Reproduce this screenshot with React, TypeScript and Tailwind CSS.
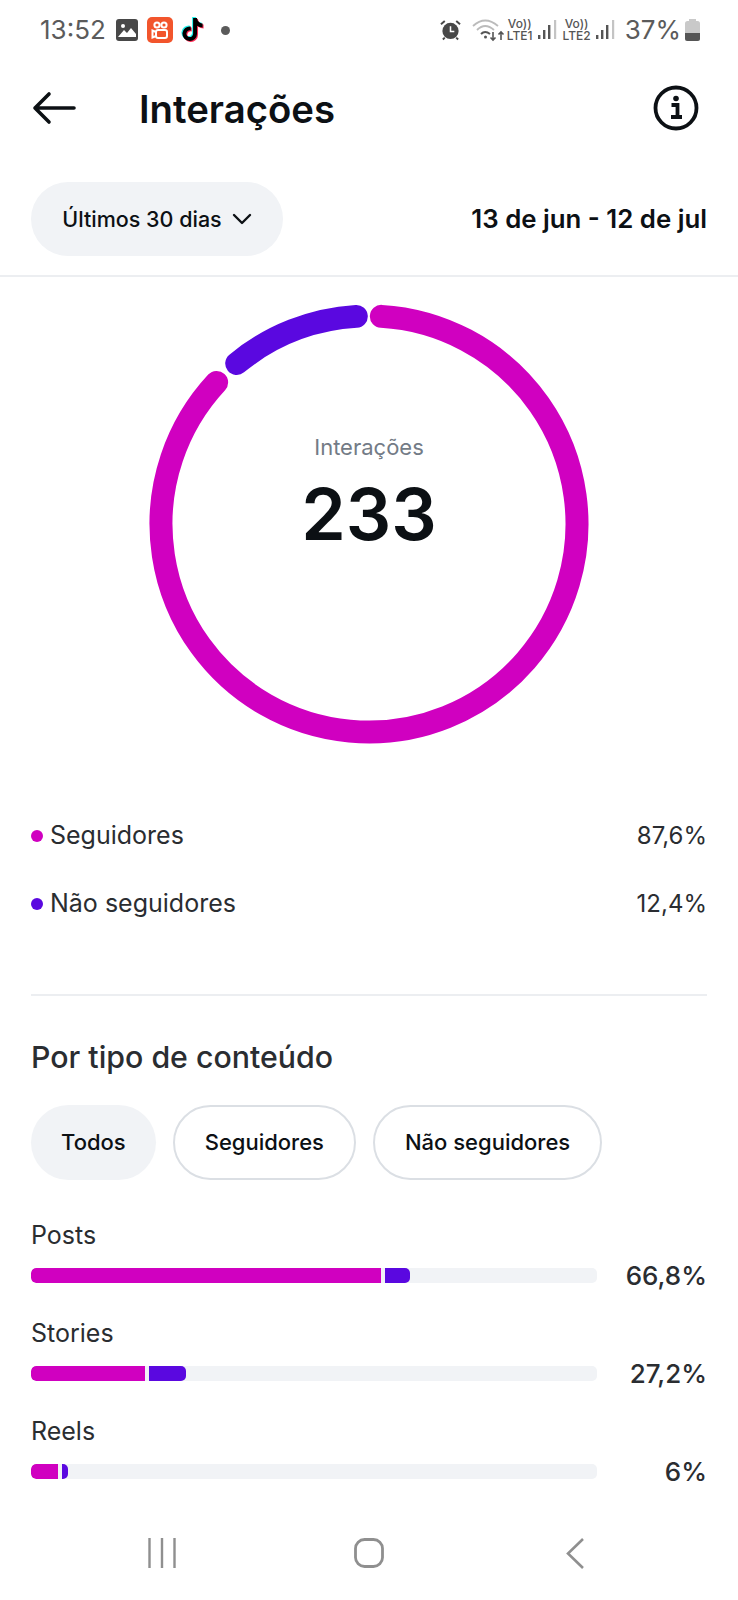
import { FaTiktok } from 'react-icons/fa';

const MAGENTA = '#d000c0';
const PURPLE = '#5a08e0';

function arc(from: number, to: number) {
  const r = 208;
  const pt = (deg: number) => {
    const a = (deg * Math.PI) / 180;
    return `${(220 + r * Math.sin(a)).toFixed(2)} ${(220 - r * Math.cos(a)).toFixed(2)}`;
  };
  const large = to - from > 180 ? 1 : 0;
  return `M ${pt(from)} A ${r} ${r} 0 ${large} 1 ${pt(to)}`;
}

function Signal() {
  return (
    <svg width="20" height="22" viewBox="0 0 20 22">
      <rect x="0" y="16" width="2.4" height="4" fill="#555" />
      <rect x="5" y="11" width="2.4" height="9" fill="#555" />
      <rect x="10" y="6" width="2.4" height="14" fill="#555" />
      <rect x="16" y="1" width="2.2" height="19" fill="#c4c4c4" />
    </svg>
  );
}

function Volte({ n }: { n: string }) {
  return (
    <div className="flex flex-col items-center text-[12px] leading-[12px] font-medium text-[#555]">
      <span>Vo))</span>
      <span>LTE{n}</span>
    </div>
  );
}

function StatusBar() {
  return (
    <div className="flex h-[60px] items-center justify-between pl-[40px] pr-[38px] text-[#5b5b5b]">
      <div className="flex items-center">
        <span className="text-[26px] leading-none">13:52</span>
        <svg className="ml-[10px]" width="22" height="22" viewBox="0 0 22 22">
          <rect width="22" height="22" rx="3" fill="#484848" />
          <circle cx="7" cy="7" r="2" fill="#fff" />
          <path d="M2 18 L8 11 L11 14 L15 9 L20 15 V18 Z" fill="#fff" />
        </svg>
        <div className="ml-[9px] flex h-[26px] w-[26px] flex-col items-center justify-center rounded-[5px] bg-[#f2552c]">
          <svg width="18" height="20" viewBox="0 0 18 20" fill="none" stroke="#fff" strokeWidth="2">
            <circle cx="6" cy="5" r="2.6" />
            <circle cx="13" cy="5" r="2.6" />
            <rect x="5" y="10" width="11" height="8" rx="2" />
            <path d="M5 12 L1.5 10.5 V17.5 L5 16" />
          </svg>
        </div>
        <div className="relative ml-[8px] h-[24px] w-[24px]">
          <FaTiktok className="absolute left-[-1px] top-[-1px] text-[#25f4ee]" size={23} />
          <FaTiktok className="absolute left-[1px] top-[1px] text-[#fe2c55]" size={23} />
          <FaTiktok className="absolute left-0 top-0 text-black" size={23} />
        </div>
        <span className="ml-[16px] h-[9px] w-[9px] rounded-full bg-[#5b5b5b]" />
      </div>
      <div className="flex items-center">
        <svg width="21" height="22" viewBox="0 0 22 22">
          <circle cx="11" cy="12" r="8.5" fill="#484848" />
          <path d="M11 7 V12.5 H15" stroke="#fff" strokeWidth="1.6" fill="none" />
          <path d="M1 5 L5 1.5 M21 5 L17 1.5 M5 19 L3 21 M17 19 L19 21" stroke="#484848" strokeWidth="2" />
        </svg>
        <svg className="ml-[11px]" width="34" height="24" viewBox="0 0 34 24" fill="none">
          <path d="M1 8 Q13 -3 26 8" stroke="#bbb" strokeWidth="1.8" />
          <path d="M5 12 Q13 4 22 12" stroke="#bbb" strokeWidth="1.8" />
          <path d="M9 16 Q13 12 18 16" stroke="#555" strokeWidth="2" />
          <circle cx="13.500" cy="19" r="1.500" fill="#555" />
          <path d="M21 14 V22 M18.500 19.500 L21 22 L23.500 19.500 M29 22 V14 M26.500 16.500 L29 14 L31.500 16.500" stroke="#555" strokeWidth="1.600" />
        </svg>
        <div className="ml-[1px]"><Volte n="1" /></div>
        <div className="ml-[5px]"><Signal /></div>
        <div className="ml-[5px]"><Volte n="2" /></div>
        <div className="ml-[5px]"><Signal /></div>
        <span className="ml-[9px] text-[26px] leading-none">37%</span>
        <svg className="ml-[4px]" width="15" height="22" viewBox="0 0 15 22">
          <rect x="4" y="0" width="7" height="3" fill="#c9c9c9" />
          <rect x="0" y="2" width="15" height="20" rx="2.500" fill="#c9c9c9" />
          <path d="M0 14 H15 V19.500 A2.500 2.500 0 0 1 12.500 22 H2.500 A2.500 2.500 0 0 1 0 19.500 Z" fill="#555" />
        </svg>
      </div>
    </div>
  );
}

function Pill({ label, active }: { label: string; active?: boolean }) {
  return (
    <div
      className={
        active
          ? 'flex h-[75px] items-center rounded-full bg-[#f1f3f6] px-[30px] text-[22px] font-medium text-[#0c1014]'
          : 'flex h-[75px] items-center rounded-full border-2 border-[#dbdfe4] px-[30px] text-[22px] font-medium text-[#0c1014]'
      }
    >
      {label}
    </div>
  );
}

function LegendRow({ color, label, value }: { color: string; label: string; value: string }) {
  return (
    <div className="flex h-[68px] items-center justify-between text-[25px] text-[#2a2d31]">
      <div className="flex items-center gap-[7px]">
        <span className="h-[12px] w-[12px] rounded-full" style={{ background: color }} />
        <span>{label}</span>
      </div>
      <span className="text-[24px]">{value}</span>
    </div>
  );
}

function BarRow({ label, a, b, value }: { label: string; a: number; b: number; value: string }) {
  return (
    <div className="flex h-[98px] flex-col">
      <div className="flex h-[49px] items-center text-[25px] text-[#2a2d31]">{label}</div>
      <div className="flex items-center justify-between">
        <div className="flex h-[15px] w-[566px] gap-[4px] overflow-hidden rounded-[5px] bg-[#f1f3f6]">
          <div className="h-full rounded-l-[5px]" style={{ width: a, background: MAGENTA }} />
          <div className="h-full rounded-r-[5px]" style={{ width: b, background: PURPLE }} />
        </div>
        <span className="mt-[1px] text-[26px] font-medium leading-[30px] text-[#2a2d31]">{value}</span>
      </div>
    </div>
  );
}

export default function App() {
  return (
    <div className="flex h-[1600px] w-[738px] flex-col overflow-hidden bg-white font-['Inter',sans-serif]">
      <StatusBar />

      <div className="flex h-[96px] items-center justify-between pl-[32px] pr-[39px]">
        <div className="flex items-center">
          <svg width="44" height="34" viewBox="0 0 44 34" fill="none" stroke="#0c1014" strokeWidth="3.600" strokeLinecap="round" strokeLinejoin="round">
            <path d="M42 17 H3 M17 3 L3 17 L17 31" />
          </svg>
          <h1 className="ml-[63px] mt-[3px] text-[38.300px] font-semibold leading-none text-[#0c1014]">Interações</h1>
        </div>
        <svg width="46" height="46" viewBox="0 0 46 46" fill="none">
          <circle cx="23" cy="23" r="20.500" stroke="#0c1014" strokeWidth="3.800" />
          <circle cx="23" cy="13.500" r="2.800" fill="#0c1014" />
          <path d="M18.500 20 H24.500 V31.500 M18 32 H29" stroke="#0c1014" strokeWidth="3.800" />
        </svg>
      </div>

      <div className="flex h-[121px] items-start justify-between border-b-2 border-[#eceef1] px-[31px] pt-[26px]">
        <div className="flex h-[74px] w-[252px] items-center justify-center gap-[10px] rounded-full bg-[#f1f3f6] text-[21.5px] font-medium text-[#0c1014]">
          Últimos 30 dias
          <svg width="20" height="12" viewBox="0 0 20 12" fill="none" stroke="#0c1014" strokeWidth="2.400" strokeLinecap="round" strokeLinejoin="round">
            <path d="M2 2 L10 10 L18 2" />
          </svg>
        </div>
        <span className="mt-[22px] text-[25.8px] font-semibold leading-[30px] text-[#0c1014]">13 de jun - 12 de jul</span>
      </div>

      <div className="relative mx-auto mt-[27px] h-[440px] w-[440px]">
        <svg width="440" height="440" viewBox="0 0 440 440" fill="none" strokeWidth="23" strokeLinecap="round">
          <path d={arc(3.4, 312.9)} stroke={MAGENTA} />
          <path d={arc(320.5, 356.5)} stroke={PURPLE} />
        </svg>
        <div className="absolute inset-0 flex flex-col items-center pt-[129px]">
          <span className="text-[22px] leading-[28px] text-[#737b86]">Interações</span>
          <span className="mt-[8px] text-[71.500px] font-semibold leading-[90px] text-[#0c1014]">233</span>
        </div>
      </div>

      <div className="mt-[58px] px-[31px]">
        <LegendRow color={MAGENTA} label="Seguidores" value="87,6%" />
        <LegendRow color={PURPLE} label="Não seguidores" value="12,4%" />
      </div>

      <div className="mx-[31px] mt-[56px] h-[2px] bg-[#eceef1]" />

      <h2 className="mt-[43px] px-[31px] text-[30.300px] font-medium leading-[36px] text-[#2a2d31]">Por tipo de conteúdo</h2>

      <div className="mt-[30px] flex gap-[17px] px-[31px]">
        <Pill label="Todos" active />
        <Pill label="Seguidores" />
        <Pill label="Não seguidores" />
      </div>

      <div className="mt-[31px] px-[31px]">
        <BarRow label="Posts" a={350} b={25} value="66,8%" />
        <BarRow label="Stories" a={114} b={37} value="27,2%" />
        <BarRow label="Reels" a={27} b={6} value="6%" />
      </div>

      <div className="mt-auto flex h-[94px] items-start pt-[32px]">
        <svg className="ml-[148px]" width="28" height="30" viewBox="0 0 28 30" fill="none" stroke="#8f8f8f" strokeWidth="2.400">
          <path d="M1.500 0 V30 M14 0 V30 M26.500 0 V30" />
        </svg>
        <svg className="ml-[178px]" width="30" height="30" viewBox="0 0 30 30" fill="none" stroke="#8f8f8f" strokeWidth="2.800">
          <rect x="1.500" y="1.500" width="27" height="27" rx="9" />
        </svg>
        <svg className="ml-[182px]" width="18" height="31" viewBox="0 0 18 31" fill="none" stroke="#8f8f8f" strokeWidth="2.600">
          <path d="M17 1 L2 15.500 L17 30" />
        </svg>
      </div>
    </div>
  );
}
